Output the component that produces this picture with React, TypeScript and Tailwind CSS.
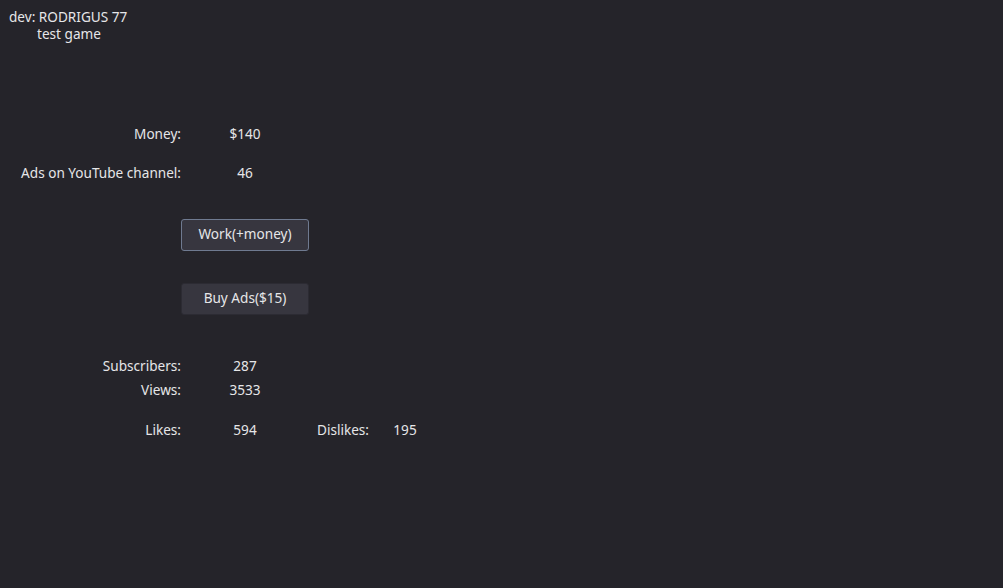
import React from "react";

const font = { fontFamily: '"Noto Sans", "Open Sans", sans-serif' };

function Row({ label, value, className = "" }: { label: string; value: string; className?: string }) {
  return (
    <div className={`flex h-5 items-center leading-5 ${className}`}>
      <span className="w-[181px] text-right">{label}</span>
      <span className="w-[128px] text-center">{value}</span>
    </div>
  );
}

export default function App() {
  return (
    <div
      className="h-[588px] w-full overflow-hidden bg-[#25242a] text-[13.6px] text-[#e6e6e8]"
      style={font}
    >
      <div className="pt-[8px] leading-[17px]">
        <div className="pl-[9px]">dev: RODRIGUS 77</div>
        <div className="pl-[37px]">test game</div>
      </div>

      <div className="mt-[82px]">
        <Row label="Money:" value="$140" />
        <Row label="Ads on YouTube channel:" value="46" className="mt-[19px]" />

        <button className="ml-[181px] mt-[36px] block h-[32px] w-[128px] rounded-[3px] border border-[#6f7a90] bg-[#37363f] pb-[2px] text-[13.6px] text-[#e6e6e8]">
          Work(+money)
        </button>
        <button className="ml-[181px] mt-[32px] block h-[32px] w-[128px] rounded-[3px] border border-[#2c2b33] bg-[#37363f] pb-[2px] text-[13.6px] text-[#e6e6e8]">
          Buy Ads($15)
        </button>

        <Row label="Subscribers:" value="287" className="mt-[41px]" />
        <Row label="Views:" value="3533" className="mt-[4px]" />
        <div className="mt-[20px] flex h-5 items-center leading-5">
          <span className="w-[181px] text-right">Likes:</span>
          <span className="w-[128px] text-center">594</span>
          <span className="w-[60px] text-right">Dislikes:</span>
          <span className="w-[72px] text-center">195</span>
        </div>
      </div>
    </div>
  );
}
